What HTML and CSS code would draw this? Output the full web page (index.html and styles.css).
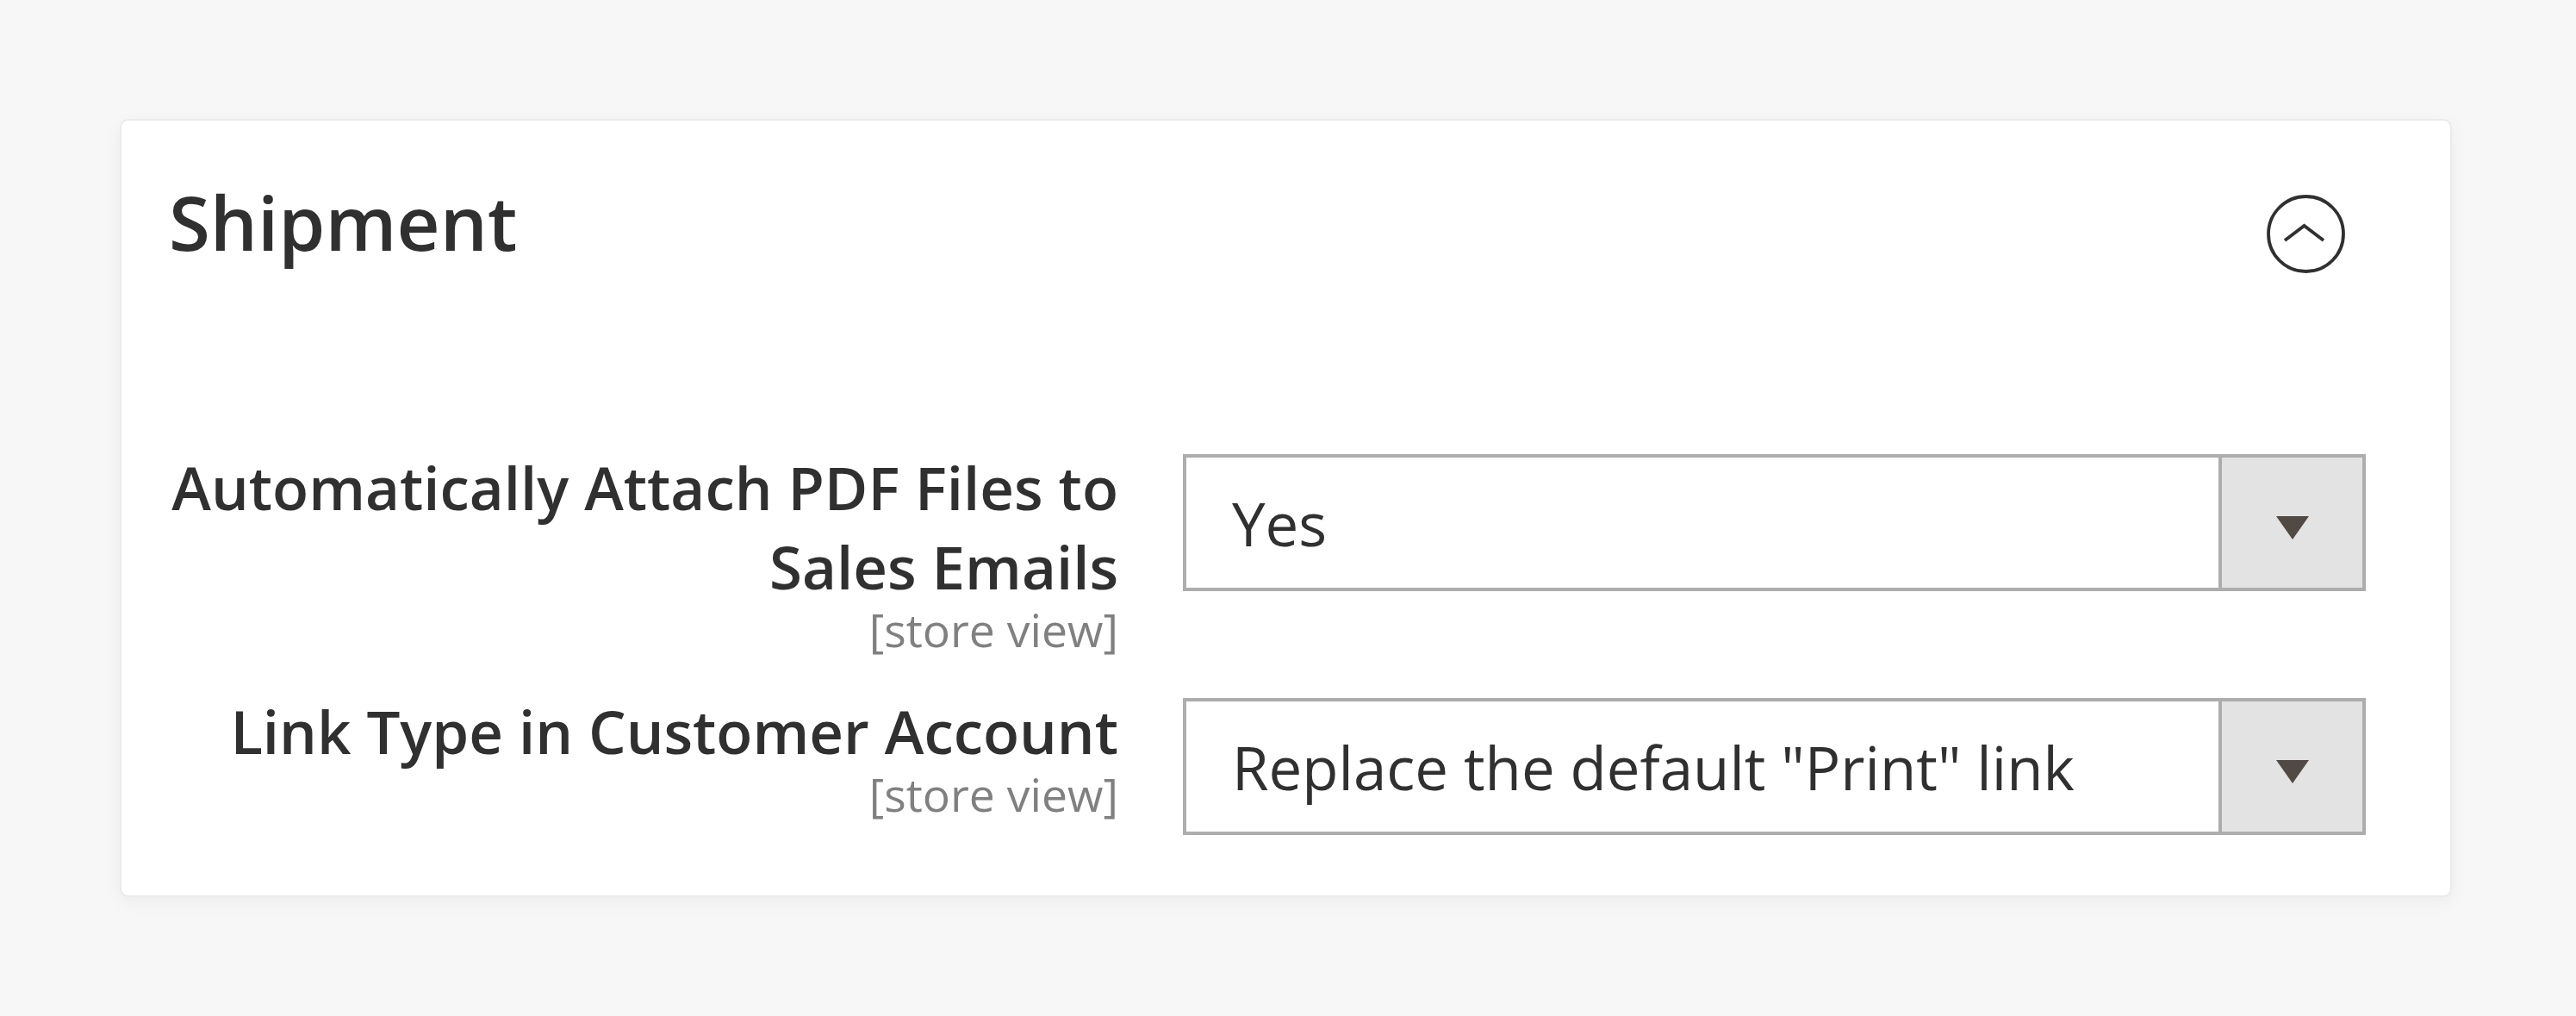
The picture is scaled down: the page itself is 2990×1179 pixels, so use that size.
FILE: index.html
```html
<html>
<head>
<title>Configuration - Sales Emails</title>
<link rel="stylesheet" href="styles.css">
</head>
<body>

<div class="section">
  <div class="section-header">
    <h2>Shipment</h2>
    <svg class="collapse-icon" width="91" height="91" viewBox="0 0 91 91">
      <circle cx="45.5" cy="45.5" r="43.5" fill="none" stroke="#303030" stroke-width="3.8"/>
      <polyline points="21,53 43.5,36 66,53" fill="none" stroke="#303030" stroke-width="3.8"/>
    </svg>
  </div>

  <div class="fields">
    <div class="field">
      <label class="field-label">Automatically Attach PDF Files to Sales Emails
        <span class="scope">[store view]</span>
      </label>
      <div class="select">
        <span class="select-value">Yes</span>
        <span class="select-button"><span class="arrow"></span></span>
      </div>
    </div>

    <div class="field">
      <label class="field-label">Link Type in Customer Account
        <span class="scope">[store view]</span>
      </label>
      <div class="select">
        <span class="select-value">Replace the default "Print" link</span>
        <span class="select-button"><span class="arrow"></span></span>
      </div>
    </div>
  </div>
</div>

</body>
</html>
```

FILE: styles.css
```css
body {
  margin:0;
  padding:138px 144px 0 139px;
  background:#f7f7f7;
  font-family:"Open Sans", "Liberation Sans", sans-serif;
  color:#303030;
}

.section {
  background:#fff;
  border:2px solid #ebebeb;
  border-radius:10px;
  box-shadow:0 6px 20px rgba(0,0,0,0.05);
  padding-bottom:70px;
}

.section-header {
  display:flex;
  justify-content:space-between;
  align-items:flex-start;
  padding:66px 122px 0 55px;
}

.section-header h2 {
  margin:0;
  font-size:87px;
  line-height:103px;
  font-weight:600;
}

.collapse-icon {
  margin-top:20px;
}

.fields {
  display:flex;
  flex-direction:column;
  gap:43px;
  margin-top:202px;
  padding:0 98px 0 25px;
}

.field {
  display:grid;
  grid-template-columns:1132px 1fr;
  column-gap:75px;
  align-items:start;
}

.field-label {
  text-align:right;
  font-size:69px;
  line-height:92px;
  font-weight:600;
}

.scope {
  display:block;
  font-size:53.5px;
  line-height:56px;
  font-weight:400;
  color:#808080;
}

.select {
  display:flex;
  height:159px;
  box-sizing:border-box;
  margin-top:8px;
  border:4px solid #adadad;
  background:#fff;
}

.select-value {
  flex:1;
  align-self:center;
  padding-left:53px;
  font-size:69px;
  line-height:92px;
}

.select-button {
  width:163px;
  border-left:4px solid #adadad;
  background:#e3e3e3;
  display:flex;
  align-items:center;
  justify-content:center;
}

.arrow {
  width:0;
  height:0;
  margin-top:12px;
  border-top:27px solid #514943;
  border-left:19px solid transparent;
  border-right:19px solid transparent;
}
```
